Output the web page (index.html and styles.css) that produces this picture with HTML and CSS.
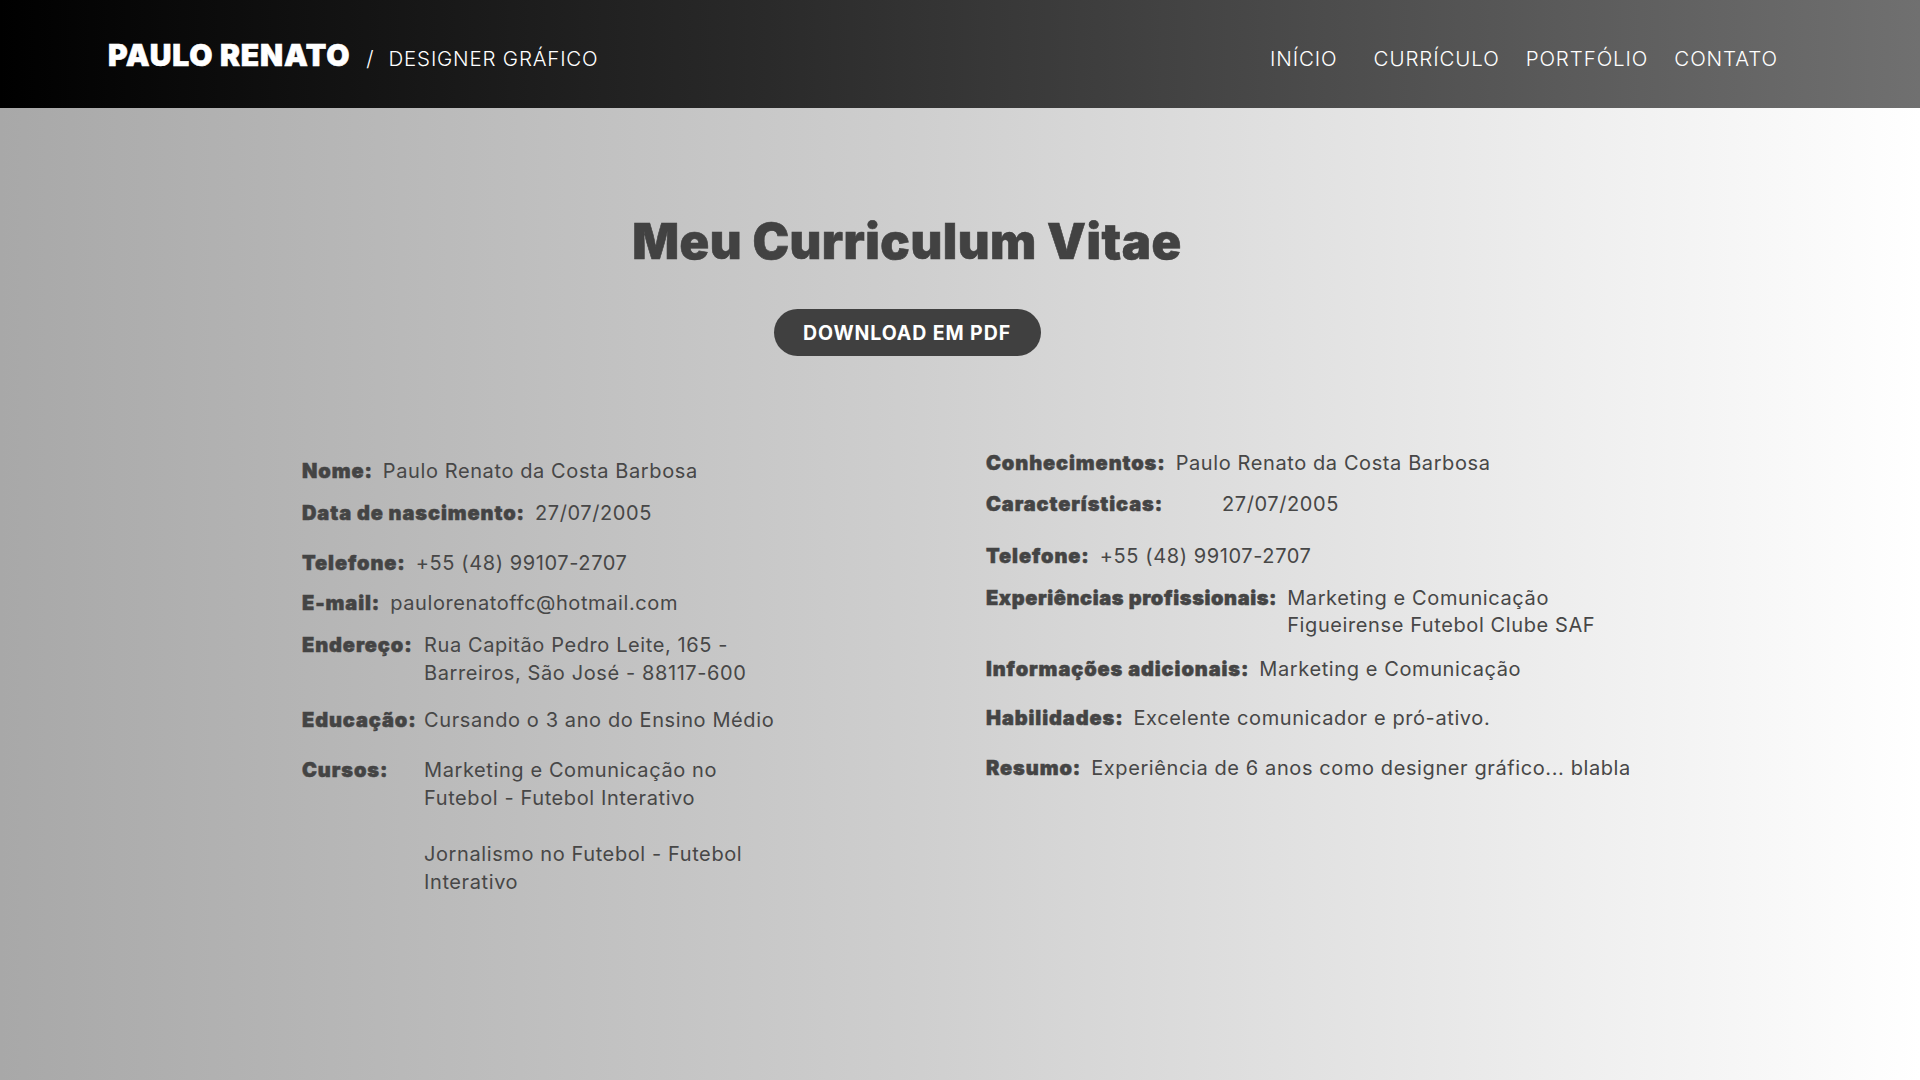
FILE: index.html
```html
<!DOCTYPE html>
<html lang="pt-BR">
<head>
<meta charset="utf-8">
<title>Paulo Renato - Currículo</title>
<link rel="stylesheet" href="styles.css">
</head>
<body>
<header class="topbar">
  <div class="brand">
    <span class="brand-name">PAULO RENATO</span>
    <span class="brand-sep">/</span>
    <span class="brand-role">DESIGNER GRÁFICO</span>
  </div>
  <nav class="menu">
    <a href="#" class="menu-item menu-first">INÍCIO</a>
    <a href="#" class="menu-item">CURRÍCULO</a>
    <a href="#" class="menu-item">PORTFÓLIO</a>
    <a href="#" class="menu-item">CONTATO</a>
  </nav>
</header>
<main class="page">
  <section class="cv">
    <h1 class="cv-title">Meu Curriculum Vitae</h1>
    <div class="cv-action"><a href="#" class="btn-pdf">DOWNLOAD EM PDF</a></div>
    <div class="cv-grid">
      <div class="col col-left">
        <div class="row r-nome"><span class="lbl">Nome:</span><span class="val">Paulo Renato da Costa Barbosa</span></div>
        <div class="row r-data"><span class="lbl">Data de nascimento:</span><span class="val">27/07/2005</span></div>
        <div class="row r-tel"><span class="lbl">Telefone:</span><span class="val">+55 (48) 99107-2707</span></div>
        <div class="row r-mail"><span class="lbl">E-mail:</span><span class="val">paulorenatoffc@hotmail.com</span></div>
        <div class="row r-end"><span class="lbl lbl-fixed">Endereço:</span><span class="val">Rua Capitão Pedro Leite, 165 -<br>Barreiros, São José - 88117-600</span></div>
        <div class="row r-edu"><span class="lbl lbl-fixed">Educação:</span><span class="val">Cursando o 3 ano do Ensino Médio</span></div>
        <div class="row r-cur"><span class="lbl lbl-fixed">Cursos:</span><span class="val">Marketing e Comunicação no<br>Futebol - Futebol Interativo<br><br>Jornalismo no Futebol - Futebol<br>Interativo</span></div>
      </div>
      <div class="col col-right">
        <div class="row q-con"><span class="lbl">Conhecimentos:</span><span class="val">Paulo Renato da Costa Barbosa</span></div>
        <div class="row q-car"><span class="lbl lbl-car">Características:</span><span class="val">27/07/2005</span></div>
        <div class="row q-tel"><span class="lbl">Telefone:</span><span class="val">+55 (48) 99107-2707</span></div>
        <div class="row q-exp"><span class="lbl lbl-tight">Experiências profissionais:</span><span class="val">Marketing e Comunicação<br>Figueirense Futebol Clube SAF</span></div>
        <div class="row q-inf"><span class="lbl">Informações adicionais:</span><span class="val">Marketing e Comunicação</span></div>
        <div class="row q-hab"><span class="lbl">Habilidades:</span><span class="val">Excelente comunicador e pró-ativo.</span></div>
        <div class="row q-res"><span class="lbl">Resumo:</span><span class="val">Experiência de 6 anos como designer gráfico... blabla</span></div>
      </div>
    </div>
  </section>
</main>
</body>
</html>
```
FILE: styles.css
```css
* { box-sizing: border-box; }
html, body { margin: 0; padding: 0; }
body {
  font-family: Inter, "Noto Sans", "DejaVu Sans", sans-serif;
  color: #444;
  min-height: 1080px;
  background: linear-gradient(90deg, #a8a8a8 0%, #cfcfcf 48%, #ffffff 100%);
}
.topbar {
  height: 108px;
  display: flex;
  align-items: center;
  justify-content: space-between;
  padding: 2px 142px 0 108px;
  background: linear-gradient(90deg, #000000 0%, #2a2a2a 40%, #707070 100%);
  color: #fff;
}
.brand { display: flex; align-items: baseline; }
.brand-name {
  font-size: 30px;
  font-weight: 900;
  letter-spacing: 0.8px;
  -webkit-text-stroke: 0.6px #fff;
}
.brand-sep { font-size: 21px; font-weight: 300; margin: 0 15px 0 16px; }
.brand-role { font-size: 20.5px; font-weight: 300; letter-spacing: 0.8px; }
.menu { display: flex; align-items: center; padding-top: 7px; }
.menu-item {
  color: #fff;
  text-decoration: none;
  font-size: 20.5px;
  font-weight: 300;
  margin-left: 26px;
  letter-spacing: 0.9px;
}
.menu-first { margin-right: 10px; }
.page { padding: 0; }
.cv { width: 1210px; margin-left: 302px; padding-top: 104px; }
.cv-title {
  margin: 0;
  text-align: center;
  font-size: 49px;
  line-height: 60px;
  font-weight: 900;
  color: #424242;
  letter-spacing: 0.5px;
  -webkit-text-stroke: 0.6px #424242;
}
.cv-action { display: flex; justify-content: center; margin-top: 37px; }
.btn-pdf {
  display: inline-flex;
  align-items: center;
  justify-content: center;
  width: 267px;
  height: 47px;
  border-radius: 24px;
  background: #404040;
  color: #fff;
  text-decoration: none;
  font-size: 19.5px;
  font-weight: 700;
  letter-spacing: 0.9px;
}
.cv-grid {
  display: grid;
  grid-template-columns: 684px 720px;
  margin-top: 92px;
}
.row { display: flex; align-items: flex-start; font-size: 20px; line-height: 28px; }
.lbl {
  font-weight: 900;
  color: #444;
  white-space: nowrap;
  margin-right: 10px;
  letter-spacing: 0.9px;
  -webkit-text-stroke: 0.5px #444;
}
.val { font-weight: 400; color: #474747; letter-spacing: 0.6px; white-space: nowrap; }
.lbl-fixed { min-width: 122px; margin-right: 0; }
.lbl-car { min-width: 236px; margin-right: 0; }
.lbl-tight { letter-spacing: 0.6px; }
.col-left { padding-top: 9px; }
.col-right { padding-top: 1px; }
.r-nome { margin-bottom: 14px; }
.r-data { margin-bottom: 22px; }
.r-tel { margin-bottom: 12px; }
.r-mail { margin-bottom: 14px; }
.r-end { margin-bottom: 19px; }
.r-edu { margin-bottom: 22px; }
.q-con { margin-bottom: 13px; }
.q-car { margin-bottom: 24px; }
.q-tel { margin-bottom: 15px; }
.q-exp { margin-bottom: 16px; line-height: 27px; }
.q-inf { margin-bottom: 21px; }
.q-hab { margin-bottom: 22px; }
```
